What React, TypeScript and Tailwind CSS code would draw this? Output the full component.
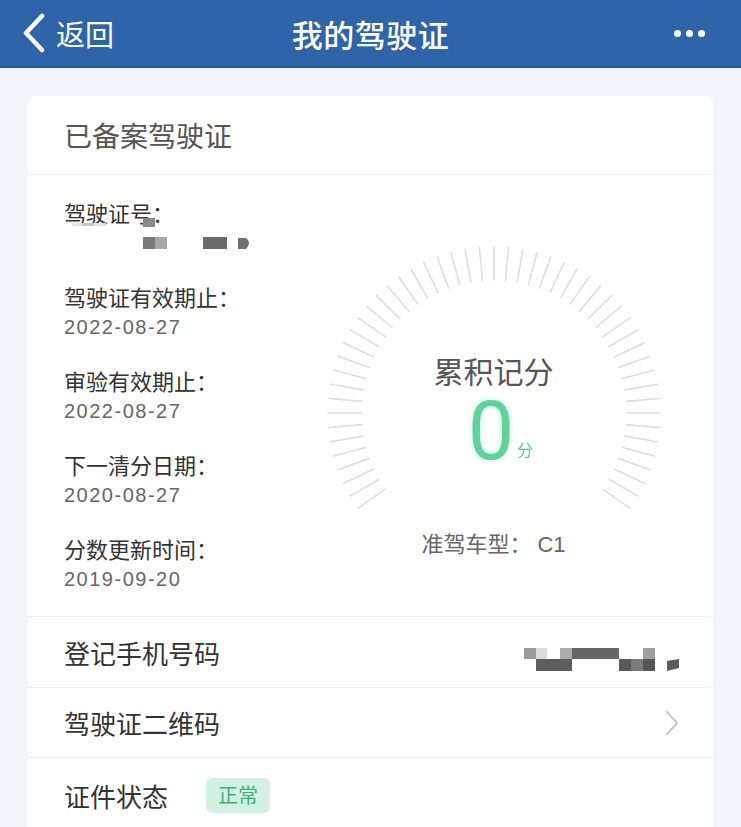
import React from "react";

function Gauge() {
  const ticks = [];
  for (let a = -125; a <= 125; a += 5) {
    const rad = (a * Math.PI) / 180;
    const x1 = 170 + 133 * Math.sin(rad);
    const y1 = 170 - 133 * Math.cos(rad);
    const x2 = 170 + 166 * Math.sin(rad);
    const y2 = 170 - 166 * Math.cos(rad);
    ticks.push(<line key={a} x1={x1} y1={y1} x2={x2} y2={y2} stroke="#dedede" strokeWidth={1.6} strokeLinecap="round" />);
  }
  return (
    <svg className="absolute inset-0" width={340} height={340} viewBox="0 0 340 340">
      {ticks}
    </svg>
  );
}

function LicenseBlur() {
  return (
    <svg width="200" height="34" viewBox="0 0 200 34">
      <rect x="8" y="6" width="34" height="3" fill="#e2e2e2" />
      <rect x="18" y="6" width="12" height="3" fill="#c8c8c8" />
      <rect x="79" y="1" width="12" height="9" fill="#8a8a8a" />
      <rect x="79" y="20" width="12" height="12" fill="#7a7a7a" />
      <rect x="91" y="20" width="12" height="12" fill="#a8a8a8" />
      <rect x="139" y="20" width="24" height="12" fill="#6a6a6a" />
      <path d="M174 21 h8 q6 4 0 11 h-8 z" fill="#707070" />
    </svg>
  );
}

function PhoneBlur() {
  return (
    <svg width="156" height="24" viewBox="0 0 156 24">
      <rect x="0" y="0" width="12" height="11" fill="#9a9a9a" />
      <rect x="12" y="0" width="11" height="11" fill="#dcdcdc" />
      <rect x="12" y="11" width="36" height="12" fill="#5e5e5e" />
      <rect x="36" y="0" width="12" height="11" fill="#ababab" />
      <rect x="48" y="0" width="47" height="11" fill="#666" />
      <rect x="95" y="11" width="12" height="12" fill="#5a5a5a" />
      <rect x="107" y="11" width="12" height="12" fill="#7a7a7a" />
      <rect x="119" y="11" width="12" height="12" fill="#555" />
      <rect x="119" y="0" width="12" height="11" fill="#a0a0a0" />
      <path d="M143 13 L155 11 L155 20 L143 23 Z" fill="#5a5a5a" />
    </svg>
  );
}

function Field({ label, value }: { label: string; value: React.ReactNode }) {
  return (
    <div className="flex flex-col">
      <div className="h-[30px] leading-[30px] text-[22px] text-[#333]">{label}</div>
      <div className="h-[28px] leading-[28px] text-[20px] text-[#666] font-['Liberation_Sans',sans-serif] tracking-[1.5px] pt-[2px]">{value}</div>
    </div>
  );
}

export default function App() {
  return (
    <div className="w-[741px] h-[827px] overflow-hidden bg-[#f4f5fa] font-['Noto_Sans_CJK_SC',sans-serif]">
      {/* header */}
      <div className="relative h-[68px] bg-[#2e64a8] border-b-2 border-[#285a98] flex items-center text-white">
        <div className="flex items-center pl-[21px] w-[200px]">
          <svg width="26" height="40" viewBox="0 0 26 40">
            <path d="M21 3 L5 20 L21 37" fill="none" stroke="white" strokeWidth="4.5" strokeLinecap="round" strokeLinejoin="round" />
          </svg>
          <span className="ml-[9px] text-[29px] leading-none">返回</span>
        </div>
        <div className="flex-1 text-center text-[31px] font-medium leading-none tracking-[0.5px]">我的驾驶证</div>
        <div className="w-[200px] flex justify-end pr-[36px] gap-[5px]">
          <span className="w-[7px] h-[7px] rounded-full bg-white" />
          <span className="w-[7px] h-[7px] rounded-full bg-white" />
          <span className="w-[7px] h-[7px] rounded-full bg-white" />
        </div>
      </div>

      {/* card */}
      <div className="mx-[28px] mt-[28px] bg-white rounded-[6px]">
        <div className="h-[79px] flex items-center pl-[36px] text-[28px] text-[#555] border-b border-[#f0f0f0]">已备案驾驶证</div>

        <div className="flex h-[442px] border-b border-[#f0f0f0]">
          <div className="w-[260px] pl-[36px] pt-[22px] flex flex-col gap-[26px]">
            <div className="flex flex-col">
              <div className="h-[30px] leading-[30px] text-[22px] text-[#333]">驾驶证号：</div>
              <div className="h-[28px]">
                <div className="-mt-[10px]">
                  <LicenseBlur />
                </div>
              </div>
            </div>
            <Field label="驾驶证有效期止：" value="2022-08-27" />
            <Field label="审验有效期止：" value="2022-08-27" />
            <Field label="下一清分日期：" value="2020-08-27" />
            <Field label="分数更新时间：" value="2019-09-20" />
          </div>
          <div className="flex-1 flex justify-center pr-[14px]">
            <div className="relative w-[340px] h-[340px] mt-[68px]">
              <Gauge />
              <div className="relative flex flex-col items-center pt-[109px]">
                <div className="h-[36px] leading-[36px] text-[30px] text-[#555]">累积记分</div>
                <div className="flex items-end mt-[1px] h-[84px] pl-[14px]">
                  <span className="font-['Roboto',sans-serif] font-normal text-[82px] leading-[84px] text-[#5cd49c] [text-shadow:0_0_6px_rgba(92,212,156,0.35)]">0</span>
                  <span className="text-[16px] text-[#5cc79a] leading-none mb-[16px] ml-[3px]">分</span>
                </div>
                <div className="mt-[54px] h-[30px] leading-[30px] text-[22px] text-[#666]">
                  准驾车型：<span className="font-['Liberation_Sans',sans-serif] ml-[6px]">C1</span>
                </div>
              </div>
            </div>
          </div>
        </div>

        <div className="h-[71px] flex items-center justify-between pl-[36px] pr-[33px] border-b border-[#f0f0f0]">
          <span className="text-[26px] text-[#333]">登记手机号码</span>
          <div className="mt-[16px]">
            <PhoneBlur />
          </div>
        </div>
        <div className="h-[70px] flex items-center justify-between pl-[36px] pr-[34px] border-b border-[#f0f0f0]">
          <span className="text-[26px] text-[#333]">驾驶证二维码</span>
          <svg width="14" height="26" viewBox="0 0 14 26">
            <path d="M2 2 L12 13 L2 24" fill="none" stroke="#bdbdbd" strokeWidth="1.8" strokeLinecap="round" strokeLinejoin="round" />
          </svg>
        </div>
        <div className="h-[74px] flex items-center pl-[36px]">
          <span className="text-[26px] text-[#333]">证件状态</span>
          <span className="ml-[38px] h-[35px] px-[12px] flex items-center rounded-[6px] bg-[#d3f1e2] text-[20px] text-[#3fae77]">正常</span>
        </div>
      </div>
    </div>
  );
}
